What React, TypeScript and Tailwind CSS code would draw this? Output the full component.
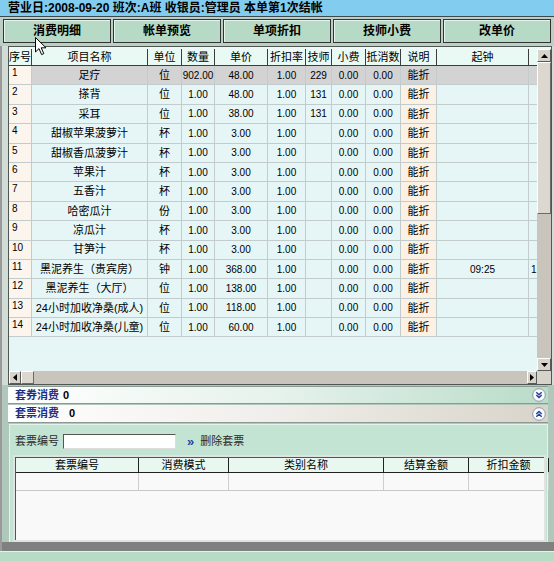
import React from 'react';

type Row = {
  no: number;
  name: string;
  unit: string;
  qty: string;
  price: string;
  tech: string;
  start?: string;
  extra?: string;
};

const rows: Row[] = [
  { no: 1, name: '足疗', unit: '位', qty: '902.00', price: '48.00', tech: '229' },
  { no: 2, name: '搽背', unit: '位', qty: '1.00', price: '48.00', tech: '131' },
  { no: 3, name: '采耳', unit: '位', qty: '1.00', price: '38.00', tech: '131' },
  { no: 4, name: '甜椒苹果菠萝汁', unit: '杯', qty: '1.00', price: '3.00', tech: '' },
  { no: 5, name: '甜椒香瓜菠萝汁', unit: '杯', qty: '1.00', price: '3.00', tech: '' },
  { no: 6, name: '苹果汁', unit: '杯', qty: '1.00', price: '3.00', tech: '' },
  { no: 7, name: '五香汁', unit: '杯', qty: '1.00', price: '3.00', tech: '' },
  { no: 8, name: '哈密瓜汁', unit: '份', qty: '1.00', price: '3.00', tech: '' },
  { no: 9, name: '凉瓜汁', unit: '杯', qty: '1.00', price: '3.00', tech: '' },
  { no: 10, name: '甘笋汁', unit: '杯', qty: '1.00', price: '3.00', tech: '' },
  { no: 11, name: '黑泥养生（贵宾房）', unit: '钟', qty: '1.00', price: '368.00', tech: '', start: '09:25', extra: '1:' },
  { no: 12, name: '黑泥养生（大厅）', unit: '位', qty: '1.00', price: '138.00', tech: '' },
  { no: 13, name: '24小时加收净桑(成人)', unit: '位', qty: '1.00', price: '118.00', tech: '' },
  { no: 14, name: '24小时加收净桑(儿童)', unit: '位', qty: '1.00', price: '60.00', tech: '' },
];

const heads = [
  { label: '序号', w: 'w-[23px]' },
  { label: '项目名称', w: 'w-[116px]' },
  { label: '单位', w: 'w-[34px]' },
  { label: '数量', w: 'w-[33px]' },
  { label: '单价', w: 'w-[53px]' },
  { label: '折扣率', w: 'w-[38px]' },
  { label: '技师', w: 'w-[26px]' },
  { label: '小费', w: 'w-[34px]' },
  { label: '抵消数', w: 'w-[35px]' },
  { label: '说明', w: 'w-[36px]' },
  { label: '起钟', w: 'w-[92px]' },
];

const buttons = ['消费明细', '帐单预览', '单项折扣', '技师小费', '改单价'];

const lowerHeads = [
  { label: '套票编号', w: 'w-[123px]' },
  { label: '消费模式', w: 'w-[90px]' },
  { label: '类别名称', w: 'w-[155px]' },
  { label: '结算金额', w: 'w-[85px]' },
  { label: '折扣金额', w: 'w-[80px]' },
];

function Cell({ w, bg, children, className = '' }: { w: string; bg: string; children?: React.ReactNode; className?: string }) {
  return (
    <div
      className={`${w} ${bg} h-full shrink-0 border-r border-b border-[#c3cccc] flex items-center justify-center whitespace-nowrap overflow-hidden ${className}`}
    >
      {children}
    </div>
  );
}

function Tri({ dir }: { dir: 'up' | 'down' | 'left' | 'right' }) {
  const pts = {
    up: '0,4 7,4 3.5,0',
    down: '0,0 7,0 3.5,4',
    left: '4,0 4,7 0,3.5',
    right: '0,0 0,7 4,3.5',
  }[dir];
  const vb = dir === 'up' || dir === 'down' ? '0 0 7 4' : '0 0 4 7';
  const size = dir === 'up' || dir === 'down' ? 'w-[7px] h-[4px]' : 'w-[4px] h-[7px]';
  return (
    <svg viewBox={vb} className={size}>
      <polygon points={pts} fill="#000" />
    </svg>
  );
}

function ArrowBox({ dir, className }: { dir: 'up' | 'down' | 'left' | 'right'; className: string }) {
  return (
    <div className={`${className} bg-[#d6d3cb] border border-t-white border-l-white border-r-[#5a5a5a] border-b-[#5a5a5a] flex items-center justify-center shrink-0`}>
      <Tri dir={dir} />
    </div>
  );
}

function Chevrons({ up }: { up?: boolean }) {
  return (
    <svg viewBox="0 0 14 14" className="w-[14px] h-[14px]">
      <circle cx="7" cy="7" r="6.3" fill="#fbfbff" stroke="#8c98a8" strokeWidth="1" />
      {up ? (
        <path d="M4.3 7 L7 4.5 L9.7 7 M4.3 9.8 L7 7.3 L9.7 9.8" fill="none" stroke="#1f3f9a" strokeWidth="1.4" />
      ) : (
        <path d="M4.3 4.2 L7 6.7 L9.7 4.2 M4.3 7 L7 9.5 L9.7 7" fill="none" stroke="#1f3f9a" strokeWidth="1.4" />
      )}
    </svg>
  );
}

export default function App() {
  return (
    <div className="relative w-[554px] h-[561px] overflow-hidden bg-[#8e8e8e] font-['Liberation_Sans','Noto_Sans_CJK_SC',sans-serif] text-black">
      {/* top info bar */}
      <div className="h-[17px] bg-[#82cdef] border-b border-[#3c4a50] pl-[8px] text-[12px] font-bold leading-[16px] whitespace-nowrap">
        营业日:2008-09-20 班次:A班 收银员:管理员 本单第1次结帐
      </div>

      {/* buttons */}
      <div className="flex gap-[2px] px-[3px] pt-[2px] pb-[3px] bg-[#bccfc5]">
        {buttons.map((b) => (
          <div
            key={b}
            className="w-[109px] h-[24px] bg-[#b7dac6] border border-[#333] shadow-[inset_1px_1px_0_#e8f4ee] flex items-center justify-center text-[12px] font-bold"
          >
            {b}
          </div>
        ))}
      </div>

      {/* main detail grid */}
      <div className="flex pl-[6px] pr-[4px] border-l-[2px] border-[#9a9a9a] bg-[#d2dcd6]">
        <div className="w-[544px] border border-[#4f5753] bg-[#eef8f6] pt-[2px] flex flex-col">
          <div className="flex h-[322px]">
            <div className="w-[528px] flex flex-col bg-[#e6f6f6]">
              {/* header */}
              <div className="flex h-[17px] bg-[#e9f9f4] text-[11px]">
                {heads.map((h) => (
                  <div
                    key={h.label}
                    className={`${h.w} shrink-0 h-full border-r border-b border-[#3d3d3d] flex items-center justify-center whitespace-nowrap`}
                  >
                    {h.label}
                  </div>
                ))}
                <div className="flex-1 h-full border-b border-[#3d3d3d]" />
              </div>
              {/* rows */}
              {rows.map((r, i) => {
                const sel = i === 0;
                const body = sel ? 'bg-[#d3d3d3]' : 'bg-[#e6f6f6]';
                const note = sel ? 'bg-[#d3d3d3]' : 'bg-[#fbf1e4]';
                return (
                  <div key={r.no} className="flex h-[19.4px] text-[11px]">
                    <Cell w="w-[23px]" bg="bg-[#fbf5ee]" className="!items-start !justify-start pl-[3px] text-[10px] leading-[14px]">
                      {r.no}
                    </Cell>
                    <Cell w="w-[116px]" bg={body}>{r.name}</Cell>
                    <Cell w="w-[34px]" bg={body}>{r.unit}</Cell>
                    <Cell w="w-[33px]" bg={body} className="text-[10px]">{r.qty}</Cell>
                    <Cell w="w-[53px]" bg={body} className="text-[10px]">{r.price}</Cell>
                    <Cell w="w-[38px]" bg={body} className="text-[10px]">1.00</Cell>
                    <Cell w="w-[26px]" bg={body} className="text-[10px]">{r.tech}</Cell>
                    <Cell w="w-[34px]" bg={body} className="text-[10px]">0.00</Cell>
                    <Cell w="w-[35px]" bg={body} className="text-[10px]">0.00</Cell>
                    <Cell w="w-[36px]" bg={note}>能折</Cell>
                    <Cell w="w-[92px]" bg={body} className="text-[10px]">{r.start}</Cell>
                    <div className={`flex-1 h-full ${body} border-b border-[#c3cccc] text-[10px] flex items-center overflow-hidden whitespace-nowrap pl-[2px]`}>
                      {r.extra}
                    </div>
                  </div>
                );
              })}
              <div className="flex-1 bg-[#e6f6f6]" />
            </div>
            {/* vertical scrollbar */}
            <div className="w-[14px] flex flex-col bg-[#cfcbc3]">
              <ArrowBox dir="up" className="h-[13px] w-[14px]" />
              <div className="h-[152px] bg-[#dcd8d0] border border-t-white border-l-white border-r-[#6a6a6a] border-b-[#6a6a6a]" />
              <div className="flex-1 bg-[#c9c5bd]" />
              <ArrowBox dir="down" className="h-[13px] w-[14px]" />
            </div>
          </div>
          {/* horizontal scrollbar */}
          <div className="flex h-[13px]">
            <div className="w-[528px] flex bg-[#c9c5bd]">
              <ArrowBox dir="left" className="w-[12px] h-[13px]" />
              <div className="w-[13px] h-[13px] bg-[#dcd8d0] border border-t-white border-l-white border-r-[#6a6a6a] border-b-[#6a6a6a]" />
              <div className="flex-1" />
              <ArrowBox dir="right" className="w-[10px] h-[13px]" />
            </div>
            <div className="w-[14px] bg-[#d6d3cb]" />
          </div>
        </div>
      </div>

      {/* lower sections */}
      <div className="pl-[6px] pr-[6px] border-l-[2px] border-[#9a9a9a] bg-[#b0c8bc] pt-[1px]">
        <div className="h-[18px] flex items-center justify-between pl-[7px] pr-[2px] border-t border-b border-[#8a9a92] bg-gradient-to-r from-white via-[#e6f2ec] to-[#b9dcc8] text-[11px] font-bold">
          <div className="flex">
            <span className="text-[#1c2f80] w-[48px]">套券消费</span>
            <span>0</span>
          </div>
          <Chevrons />
        </div>
        <div className="h-[18px] mt-[1px] flex items-center justify-between pl-[7px] pr-[2px] border-b border-[#8a9a92] bg-gradient-to-r from-white via-[#f0eeea] to-[#d8d4ca] text-[11px] font-bold">
          <div className="flex">
            <span className="text-[#1c2f80] w-[54px]">套票消费</span>
            <span>0</span>
          </div>
          <Chevrons up />
        </div>

        {/* green panel */}
        <div className="mt-[1px] ml-[1px] bg-[#c3e4d2] border border-[#e6f2ec] border-b-0 pl-[3px] pr-[1px] pt-[8px] h-[118px] flex flex-col">
          <div className="flex items-center h-[16px] text-[11px] text-[#2a2a2a]">
            <span className="ml-[2px] w-[48px]">套票编号</span>
            <div className="w-[113px] h-[15px] bg-white border border-t-[#555] border-l-[#555] border-r-[#ddd] border-b-[#ddd]" />
            <span className="ml-[11px] text-[#2444a6] font-bold text-[13px] leading-[13px]">»</span>
            <span className="ml-[6px]">删除套票</span>
          </div>
          <div className="mt-[6px] flex-1 border-2 border-[#e2e2e2] bg-[#f9f9f9]">
            <div className="h-full border-l border-t border-[#555] flex flex-col">
              <div className="flex h-[15px] bg-[#e8f8f0] text-[11px] border-b border-[#222]">
                {lowerHeads.map((h) => (
                  <div key={h.label} className={`${h.w} shrink-0 h-full border-r border-[#222] flex items-center justify-center`}>
                    {h.label}
                  </div>
                ))}
              </div>
              <div className="flex h-[18px] border-b border-[#c8c8c8]">
                {lowerHeads.map((h) => (
                  <div key={h.label} className={`${h.w} shrink-0 h-full border-r border-[#cfcfcf]`} />
                ))}
              </div>
              <div className="flex-1" />
            </div>
          </div>
        </div>
      </div>

      {/* bottom bands */}
      <div className="h-[9px] bg-[#808080] border-l-[2px] border-[#9a9a9a]" />
      <div className="h-[10px] bg-[#b6dcc6] border-t border-[#e4f2ea]" />

      {/* mouse cursor */}
      <svg viewBox="0 0 12 19" className="absolute left-[35px] top-[37px] w-[12px] h-[19px]">
        <path d="M0.5 0.5 L0.5 15 L4 11.6 L6.6 17.6 L8.8 16.6 L6.2 10.8 L11 10.8 Z" fill="#fff" stroke="#000" strokeWidth="1" strokeLinejoin="miter" />
      </svg>
    </div>
  );
}
